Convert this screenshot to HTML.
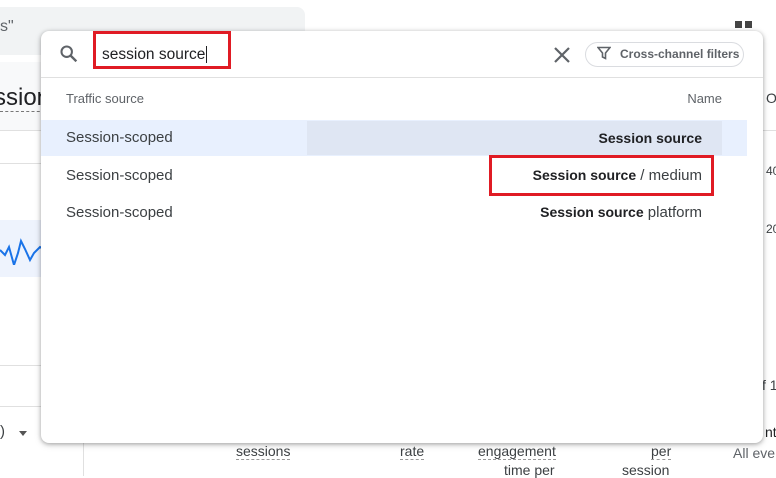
<!DOCTYPE html>
<html><head><style>
body{margin:0;width:776px;height:476px;overflow:hidden;background:#fff;font-family:"Liberation Sans",Arial,sans-serif;position:relative;color:#3c4043}
.a{position:absolute;white-space:nowrap}
.hl{position:absolute;height:1px;background:#e0e0e0}
b{font-size:14px;color:#202124}
</style></head><body>
<div class="a" style="left:-10px;top:7px;width:315px;height:48px;background:#f1f3f4;border-radius:8px"></div>
<div class="a" style="left:0;top:18px;font-size:16px;color:#5f6368">s"</div>
<div class="a" style="left:0;top:62px;width:45px;height:68px;background:#f8f9fa"></div>
<div class="a" style="left:-6px;top:84px;font-size:24px;color:#202124">ssion</div>
<div class="a" style="left:0;top:111px;width:45px;border-top:1px dashed #777"></div>
<div class="hl" style="left:0;top:130px;width:45px"></div>
<div class="hl" style="left:0;top:163px;width:45px"></div>
<div class="hl" style="left:0;top:220px;width:45px"></div>
<div class="a" style="left:0;top:220px;width:45px;height:57px;background:#eef3fd"></div>
<svg class="a" style="left:0;top:235px" width="45" height="30"><polyline points="0,15 5,20 9,12 14,30 18,18 21,6 25,14 30,25 34,18 40,12 45,15" fill="none" stroke="#1a73e8" stroke-width="2"/></svg>
<div class="hl" style="left:0;top:365px;width:45px"></div>
<div class="hl" style="left:0;top:406px;width:45px"></div>
<div class="a" style="left:0;top:423px;font-size:15px">)</div>
<div class="a" style="left:19px;top:431px;border:4px solid transparent;border-top:5px solid #555"></div>
<div class="a" style="left:83px;top:440px;width:1px;height:36px;background:#e0e0e0"></div>
<div class="a" style="left:735px;top:21px;width:7px;height:7px;background:#444"></div>
<div class="a" style="left:745px;top:21px;width:7px;height:7px;background:#444"></div>
<div class="a" style="left:766px;top:90px;font-size:14px">O</div>
<div class="a" style="left:766px;top:164px;font-size:12px">40</div>
<div class="a" style="left:766px;top:222px;font-size:12px">20</div>
<div class="a" style="left:762px;top:377px;font-size:14px">f 1</div>
<div class="hl" style="left:760px;top:130px;width:16px"></div>
<div class="a" style="left:765px;top:424px;font-size:14px;color:#202124">nt</div>
<div class="a" style="left:733px;top:445px;font-size:14px;color:#5f6368">All eve</div>
<div class="a" style="left:236px;top:443px;font-size:14px;color:#3c4043;border-bottom:1px dashed #999">sessions</div>
<div class="a" style="left:400px;top:443px;font-size:14px;border-bottom:1px dashed #999">rate</div>
<div class="a" style="left:478px;top:443px;font-size:14px;border-bottom:1px dashed #999">engagement</div>
<div class="a" style="left:504px;top:462px;font-size:14px">time per</div>
<div class="a" style="left:651px;top:443px;font-size:14px;border-bottom:1px dashed #999">per</div>
<div class="a" style="left:622px;top:462px;font-size:14px">session</div>

<div class="a" style="left:41px;top:31px;width:722px;height:412px;background:#fff;border-radius:8px;box-shadow:0 1px 4px rgba(0,0,0,.3),0 2px 8px rgba(0,0,0,.12)">
<svg class="a" style="left:17px;top:12px" width="22" height="22" viewBox="0 0 24 24"><circle cx="9.5" cy="9.5" r="5.7" fill="none" stroke="#5f6368" stroke-width="2.2"/><line x1="13.8" y1="13.8" x2="20" y2="20" stroke="#5f6368" stroke-width="2.6"/></svg>
<div class="a" style="left:52px;top:0;width:132px;height:32px;border:3px solid #e01b24"></div>
<div class="a" style="left:61px;top:15px;font-size:15.5px;color:#202124">session source<span style="border-left:1px solid #202124;margin-left:1px"></span></div>
<svg class="a" style="left:512px;top:15px" width="18" height="18"><path d="M2 2L16 16M16 2L2 16" stroke="#5f6368" stroke-width="2.2"/></svg>
<div class="a" style="left:544px;top:11px;width:157px;height:23px;border:1px solid #dadce0;border-radius:13px"></div>
<svg class="a" style="left:556px;top:15px" width="14" height="14" viewBox="0 0 14 14"><path d="M1 1.5H13L8.5 7V12.5L5.5 11V7Z" fill="none" stroke="#5f6368" stroke-width="1.6"/></svg>
<div class="a" style="left:579px;top:16px;font-size:12px;font-weight:bold;color:#5f6368">Cross-channel filters</div>
<div class="hl" style="left:0;top:46px;width:722px"></div>
<div class="a" style="left:25px;top:60px;font-size:13px;color:#5f6368">Traffic source</div>
<div class="a" style="right:41px;top:60px;font-size:13px;color:#5f6368">Name</div>
<div class="a" style="left:0;top:89px;width:706px;height:36px;background:#e8f0fe"></div>
<div class="a" style="left:266px;top:90px;width:415px;height:34px;background:#dfe6f3"></div>
<div class="a" style="left:25px;top:98px;font-size:15px">Session-scoped</div>
<div class="a" style="right:61px;top:99px;font-size:15px"><b>Session source</b></div>
<div class="a" style="left:25px;top:136px;font-size:15px">Session-scoped</div>
<div class="a" style="left:448px;top:124px;width:219px;height:35px;border:3px solid #e01b24"></div>
<div class="a" style="right:61px;top:136px;font-size:15px;color:#3c4043"><b>Session source</b> / medium</div>
<div class="a" style="left:25px;top:173px;font-size:15px">Session-scoped</div>
<div class="a" style="right:61px;top:173px;font-size:15px"><b>Session source</b> platform</div>
</div>
</body></html>
